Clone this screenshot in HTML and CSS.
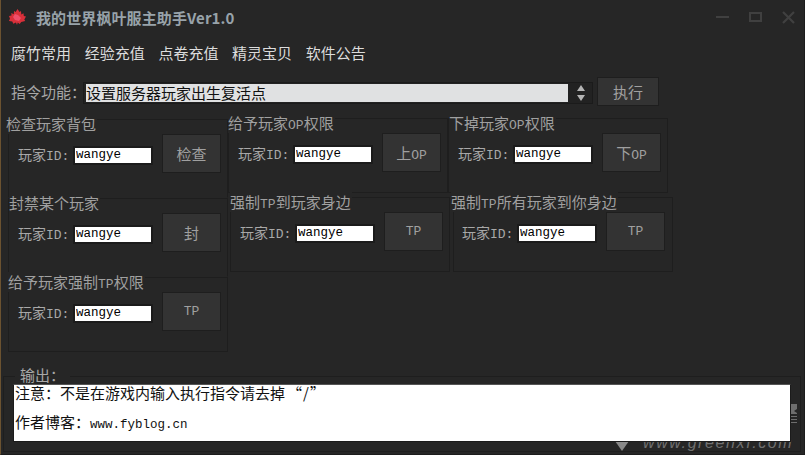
FILE: index.html
```html
<!DOCTYPE html>
<html lang="zh-CN">
<head>
    <meta charset="utf-8">
    <title>我的世界枫叶服主助手</title>
    <link rel="stylesheet" href="styles.css">
</head>
<body>
<div class="window">
    <div class="titlebar">
        <svg class="logo" width="17" height="16" viewBox="0 0 17 16">
            <path d="M8.500 0l2 3 1.500-1 .3 3.500 2.200-1.200.3 2.700 2.200.5-1.700 3 .9 1.500-4 1-1.500 2-2-1.500-.7 2.500-1-2.500-2.700 1.300-1-2.300-3.500-.5 1.200-2.200L0 7l2.500-.5-.2-2.500 2.500 1.300L5 2l1.700 1z" fill="#d9303a"/>
            <path d="M6 5l3 1 3 3-2 3-4-1-2-3z" fill="#ee4f6a"/>
        </svg>
        <span class="app-title">我的世界枫叶服主助手Ver1.0</span>
        <div class="win-controls">
            <span class="win-min"></span>
            <span class="win-max"></span>
            <svg width="13" height="13" viewBox="0 0 13 13"><path d="M1 1l11 11M12 1L1 12" stroke="#404040" stroke-width="2.200"/></svg>
        </div>
    </div>

    <div class="menu">
        <span>腐竹常用</span>
        <span>经验充值</span>
        <span>点卷充值</span>
        <span>精灵宝贝</span>
        <span>软件公告</span>
    </div>

    <div class="command">
        <label class="command-label">指令功能&#xFF1A;</label>
        <div class="select">
            <div class="select-value">设置服务器玩家出生复活点</div>
            <svg width="12" height="18" viewBox="0 0 12 18"><path d="M6 1l4 6H2zM6 17l-4-6h8z" fill="#b4b4b4"/></svg>
        </div>
        <button class="btn btn-run">执行</button>
    </div>

    <div class="panels">
        <div class="row row-1">
            <div class="panel panel-low panel-tall">
                <div class="panel-title title-out">检查玩家背包</div>
                <div class="panel-body">
                    <label>玩家<span class="mono">ID:</span></label>
                    <input type="text" value="wangye">
                    <button class="btn">检查</button>
                </div>
            </div>
            <div class="panel">
                <div class="panel-title">给予玩家<span class="mono">OP</span>权限</div>
                <div class="panel-body">
                    <label>玩家<span class="mono">ID:</span></label>
                    <input type="text" value="wangye">
                    <button class="btn">上<span class="mono">OP</span></button>
                </div>
            </div>
            <div class="panel">
                <div class="panel-title title-in">下掉玩家<span class="mono">OP</span>权限</div>
                <div class="panel-body">
                    <label>玩家<span class="mono">ID:</span></label>
                    <input type="text" value="wangye">
                    <button class="btn">下<span class="mono">OP</span></button>
                </div>
            </div>
        </div>
        <div class="row row-2">
            <div class="panel panel-low panel-tall">
                <div class="panel-title title-in">封禁某个玩家</div>
                <div class="panel-body">
                    <label>玩家<span class="mono">ID:</span></label>
                    <input type="text" value="wangye">
                    <button class="btn">封</button>
                </div>
            </div>
            <div class="panel shift-2">
                <div class="panel-title">强制<span class="mono">TP</span>到玩家身边</div>
                <div class="panel-body">
                    <label>玩家<span class="mono">ID:</span></label>
                    <input type="text" value="wangye">
                    <button class="btn btn-mono">TP</button>
                </div>
            </div>
            <div class="panel shift-1">
                <div class="panel-title title-out">强制<span class="mono">TP</span>所有玩家到你身边</div>
                <div class="panel-body">
                    <label>玩家<span class="mono">ID:</span></label>
                    <input type="text" value="wangye">
                    <button class="btn btn-mono">TP</button>
                </div>
            </div>
        </div>
        <div class="row">
            <div class="panel">
                <div class="panel-title">给予玩家强制<span class="mono">TP</span>权限</div>
                <div class="panel-body">
                    <label>玩家<span class="mono">ID:</span></label>
                    <input type="text" value="wangye">
                    <button class="btn btn-mono">TP</button>
                </div>
            </div>
        </div>
    </div>

    <div class="output">
        <div class="output-title">输出&#xFF1A;</div>
        <div class="output-box">
            <div class="output-note">注意&#xFF1A;不是在游戏内输入执行指令请去掉<span class="quote">&#8220;/&#8221;</span></div>
            <div class="output-link">作者博客&#xFF1A;<span class="url">www.fyblog.cn</span></div>
        </div>
    </div>

    <svg class="wm-arrow" width="14" height="10" viewBox="0 0 14 10"><path d="M0 0h14L7 10z" fill="#8a8a8a"/></svg>
    <svg class="wm-stamp" width="7" height="24" viewBox="0 0 7 24"><path d="M0 0h7v5l-3 2 3 2v1H1v2h6v1H1v2h6v1H1v2h6v1H0z" fill="#6e6e6e"/></svg>
    <span class="wm-text">www.greenxf.com</span>
    <span class="edge-blue"></span>
</div>
</body>
</html>
```

FILE: styles.css
```css
* {
    box-sizing: border-box;
}
html, body {
    margin: 0;
    padding: 0;
}
body {
    font-family: "Noto Sans CJK SC", sans-serif;
    background-color: #262626;
    color: #a8a8a8;
}
.window {
    position: relative;
    width: 805px;
    height: 455px;
    overflow: hidden;
    background-color: #262626;
    border-left: 1px solid #6b5230;
    border-right: 1px solid #1c1c1c;
    border-bottom: 1px solid #1c1c1c;
}
.mono {
    font-family: "Liberation Mono", monospace;
    font-size: 13px;
}

/* title bar */
.titlebar {
    display: flex;
    align-items: center;
    height: 34px;
    padding-left: 8px;
}
.logo {
    margin-right: 10px;
}
.app-title {
    font-size: 15px;
    font-weight: bold;
    letter-spacing: 0.100px;
    color: #98a3aa;
}
.win-controls {
    display: flex;
    align-items: center;
    gap: 20px;
    margin-left: auto;
    padding-right: 9px;
}
.win-min {
    width: 13px;
    height: 2px;
    background-color: #404040;
}
.win-max {
    width: 13px;
    height: 10px;
    border: 2px solid #404040;
}

/* menu */
.menu {
    display: flex;
    gap: 13.700px;
    height: 43px;
    padding-left: 10px;
    padding-top: 7px;
    font-size: 15px;
    line-height: 24px;
    color: #dcdcdc;
}

/* command row */
.command {
    display: flex;
    align-items: center;
    height: 29px;
    padding-left: 10px;
}
.command-label {
    width: 72px;
    font-size: 15px;
    white-space: nowrap;
    color: #a8a8a8;
}
.select {
    display: flex;
    align-items: center;
    width: 510px;
    height: 22px;
    margin-top: 3px;
    padding-left: 2px;
    background-color: #222;
    border: 1px solid #1b1b1b;
}
.select-value {
    width: 482px;
    height: 18px;
    font-size: 15px;
    line-height: 18px;
    color: #111;
    background-color: #e0e1e2;
}
.select svg {
    margin-left: 7px;
}
.btn {
    width: 59px;
    height: 39px;
    padding: 0;
    font-family: inherit;
    font-size: 15px;
    color: #a0a0a0;
    background-color: #333;
    border: 1px solid #1e1e1e;
}
.btn-run {
    width: 62px;
    height: 29px;
    margin-left: 4px;
}
.btn-mono {
    font-family: "Liberation Mono", monospace;
    font-size: 13px;
}

/* panels */
.panels {
    padding-left: 7px;
    margin-top: 12px;
}
.row {
    display: flex;
    height: 80px;
}
.row-1 {
    height: 79px;
}
.panel {
    width: 220px;
    height: 75px;
    border: 1px solid #1e1e1e;
}
.panel-low {
    margin-top: 1px;
}
.panel-tall {
    height: 79px;
    border-bottom-color: transparent;
}
.shift-2 {
    margin-left: 2px;
}
.shift-1 {
    margin-left: 3px;
}
.shift-1 .panel-body {
    padding-left: 8px;
}
.shift-2 .btn, .shift-1 .btn {
    margin-left: 8px;
}
.panel-title {
    width: fit-content;
    height: 20px;
    margin-top: -6px;
    margin-left: -1px;
    padding-right: 1px;
    font-size: 15px;
    line-height: 20px;
    color: #a0a0a0;
    background-color: #262626;
}
.title-in {
    margin-left: 0;
}
.title-out {
    margin-left: -3px;
}
.panel-body {
    display: flex;
    align-items: center;
    padding-left: 9px;
}
.panel-body label {
    width: 55px;
    font-size: 14px;
    white-space: nowrap;
}
.panel-body input {
    width: 80px;
    height: 19px;
    margin-top: 3px;
    padding: 0 0 0 1px;
    font-family: "Liberation Mono", monospace;
    font-size: 12.500px;
    color: #000;
    background-color: #fff;
    border: 2px solid #1b1b1b;
    outline: none;
}
.panel-body .btn {
    margin-left: 9px;
}

/* output */
.output {
    position: relative;
    z-index: 1;
    width: 798px;
    height: 76px;
    margin-top: 19px;
    margin-left: 2px;
    border: 1px solid #1e1e1e;
}
.output-title {
    width: fit-content;
    height: 16px;
    margin-top: -10px;
    margin-left: 11px;
    padding: 0 5px;
    font-size: 15px;
    line-height: 16px;
    color: #a8a8a8;
    background-color: #262626;
}
.output-box {
    width: 778px;
    height: 58px;
    margin-left: 9px;
    margin-top: 1px;
    padding-left: 1px;
    background-color: #fff;
    border: 1px solid #1b1b1b;
    border-top-color: #555;
    color: #111;
    font-size: 15px;
}
.output-note {
    height: 22px;
    line-height: 16px;
}
.quote {
    margin-left: 2px;
    letter-spacing: 1px;
}
.output-link {
    padding-top: 4px;
    line-height: 22px;
}
.url {
    font-family: "Liberation Mono", monospace;
    font-size: 12.500px;
}

/* download-site watermark sits under the output box */
.wm-text {
    position: absolute;
    left: 642px;
    top: 434px;
    font-family: "Liberation Sans", sans-serif;
    font-style: italic;
    font-size: 16px;
    letter-spacing: 1.600px;
    color: #707070;
}
.wm-arrow {
    position: absolute;
    left: 614px;
    top: 441px;
}
.wm-stamp {
    position: absolute;
    left: 789px;
    top: 404px;
}
.edge-blue {
    position: absolute;
    right: -1px;
    top: 38px;
    width: 1px;
    height: 37px;
    background-color: #5a7fa8;
}
```
